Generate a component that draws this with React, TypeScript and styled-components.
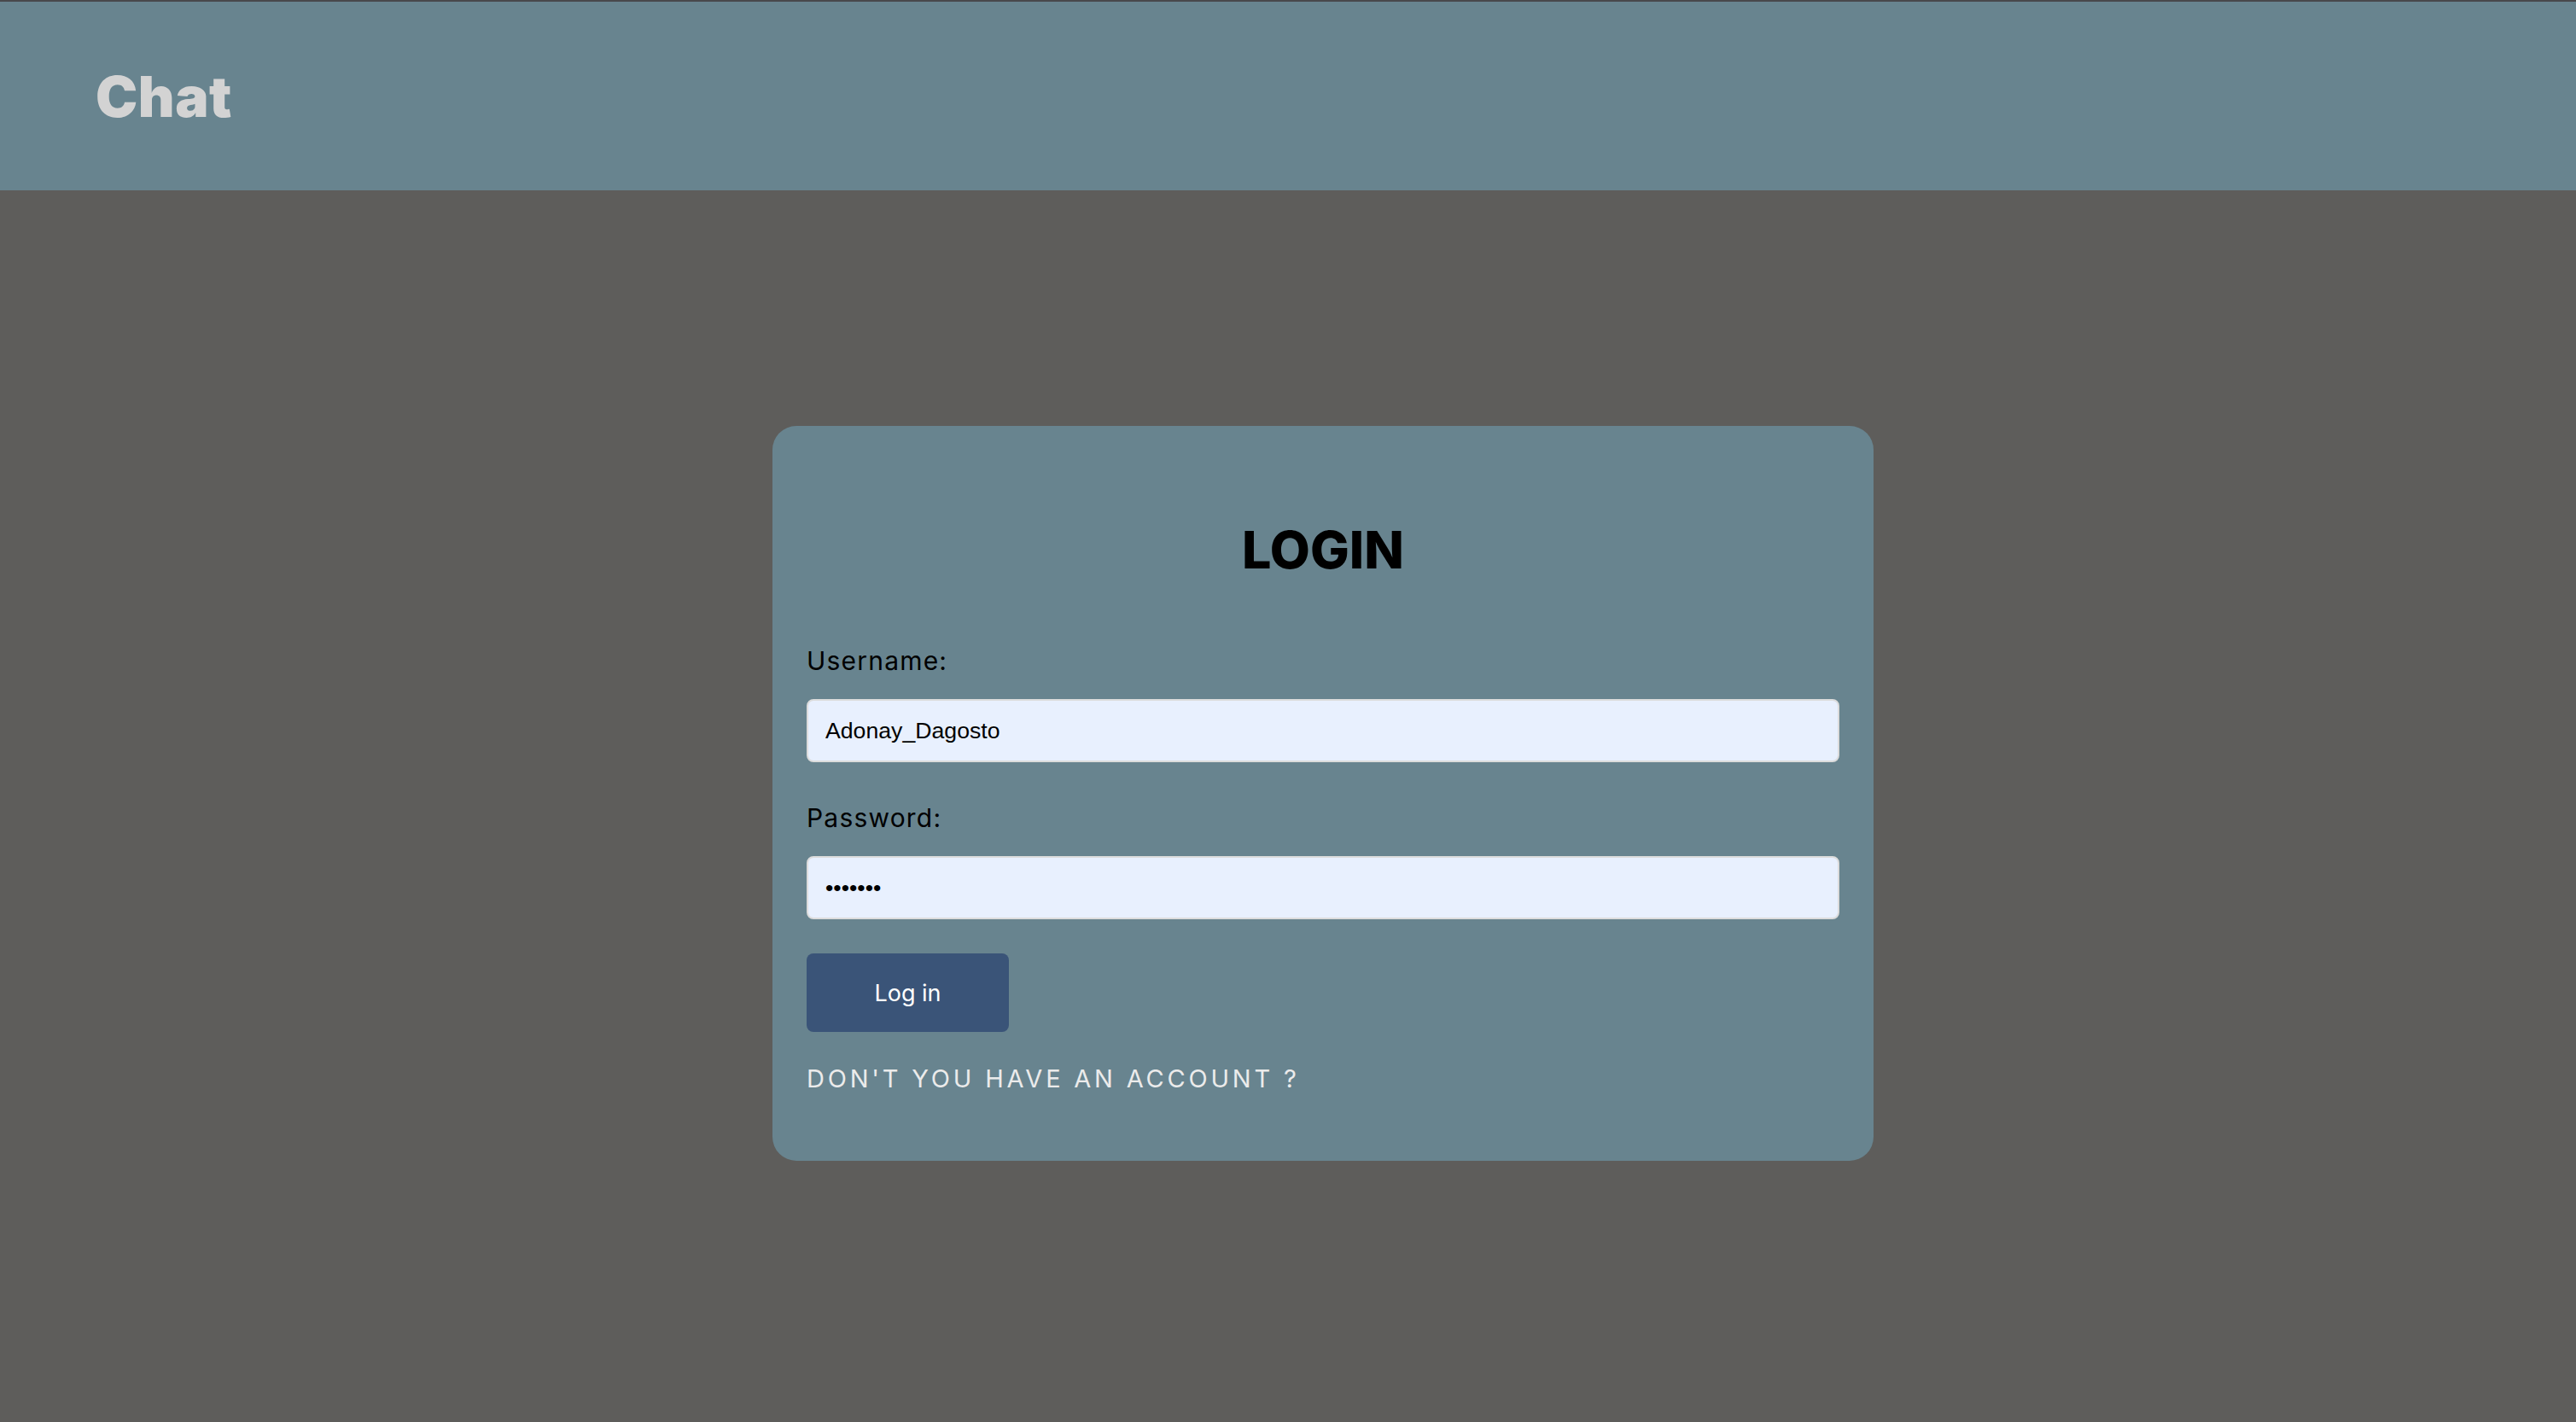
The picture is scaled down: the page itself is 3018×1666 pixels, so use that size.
import React from "react";
import styled, { createGlobalStyle } from "styled-components";

const GlobalStyle = createGlobalStyle`
  html, body {
    margin: 0;
    padding: 0;
    background: #5e5d5b;
  }
  body {
    font-family: Inter, "Open Sans", sans-serif;
  }
  * { box-sizing: border-box; }
`;

const Page = styled.div`
  min-height: 1666px;
  display: flex;
  flex-direction: column;
  border-top: 2px solid #48484c;
  background: #5e5d5b;
`;

const Header = styled.header`
  height: 221px;
  background: #68848f;
  display: flex;
  align-items: center;
  padding-left: 112px;
`;

const Brand = styled.h1`
  margin: 0;
  font-family: Inter, sans-serif;
  font-weight: 900;
  font-size: 66px;
  line-height: 66px;
  color: #d3d3d3;
  letter-spacing: 0.5px;
`;

const Main = styled.main`
  flex: 1;
  display: flex;
  justify-content: center;
  align-items: flex-start;
  padding-top: 276px;
  padding-left: 82px;
`;

const Card = styled.form`
  width: 1290px;
  background: #68848f;
  border-radius: 28px;
  padding: 114px 40px 81px;
  display: flex;
  flex-direction: column;
`;

const Title = styled.h2`
  margin: 0 0 84px;
  text-align: center;
  font-family: Inter, sans-serif;
  font-weight: 800;
  font-size: 61px;
  line-height: 62px;
  color: #000;
`;

const Field = styled.label<{ $mb: number }>`
  display: flex;
  flex-direction: column;
  gap: 30px;
  margin-bottom: ${(p) => p.$mb}px;
`;

const LabelText = styled.span`
  font-family: Inter, sans-serif;
  font-weight: 400;
  font-size: 30px;
  line-height: 30px;
  color: #000;
  letter-spacing: 1.2px;
`;

const Input = styled.input`
  width: 100%;
  height: 74px;
  border: 2px solid #dcdcdc;
  border-radius: 8px;
  background: #e8f0fe;
  padding: 0 20px;
  font-family: "Liberation Sans", Arial, sans-serif;
  font-size: 26.67px;
  color: #000;
  outline: none;
`;

const Button = styled.button`
  align-self: flex-start;
  width: 237px;
  height: 92px;
  margin-top: 40px;
  border: none;
  border-radius: 8px;
  background: #3a5478;
  color: #fff;
  font-family: Inter, sans-serif;
  font-size: 27px;
  font-weight: 400;
  cursor: pointer;
`;

const SignupLink = styled.a`
  margin-top: 40px;
  font-family: Inter, sans-serif;
  font-weight: 400;
  font-size: 29px;
  line-height: 30px;
  letter-spacing: 3.8px;
  color: #ebebeb;
  text-decoration: none;
  text-transform: uppercase;
`;

export default function App() {
  return (
    <>
      <GlobalStyle />
      <Page>
        <Header>
          <Brand>Chat</Brand>
        </Header>
        <Main>
          <Card onSubmit={(e) => e.preventDefault()}>
            <Title>LOGIN</Title>
            <Field $mb={50}>
              <LabelText>Username:</LabelText>
              <Input type="text" defaultValue="Adonay_Dagosto" />
            </Field>
            <Field $mb={0}>
              <LabelText>Password:</LabelText>
              <Input type="password" defaultValue="1234567" />
            </Field>
            <Button type="submit">Log in</Button>
            <SignupLink href="#">Don't you have an account ?</SignupLink>
          </Card>
        </Main>
      </Page>
    </>
  );
}
